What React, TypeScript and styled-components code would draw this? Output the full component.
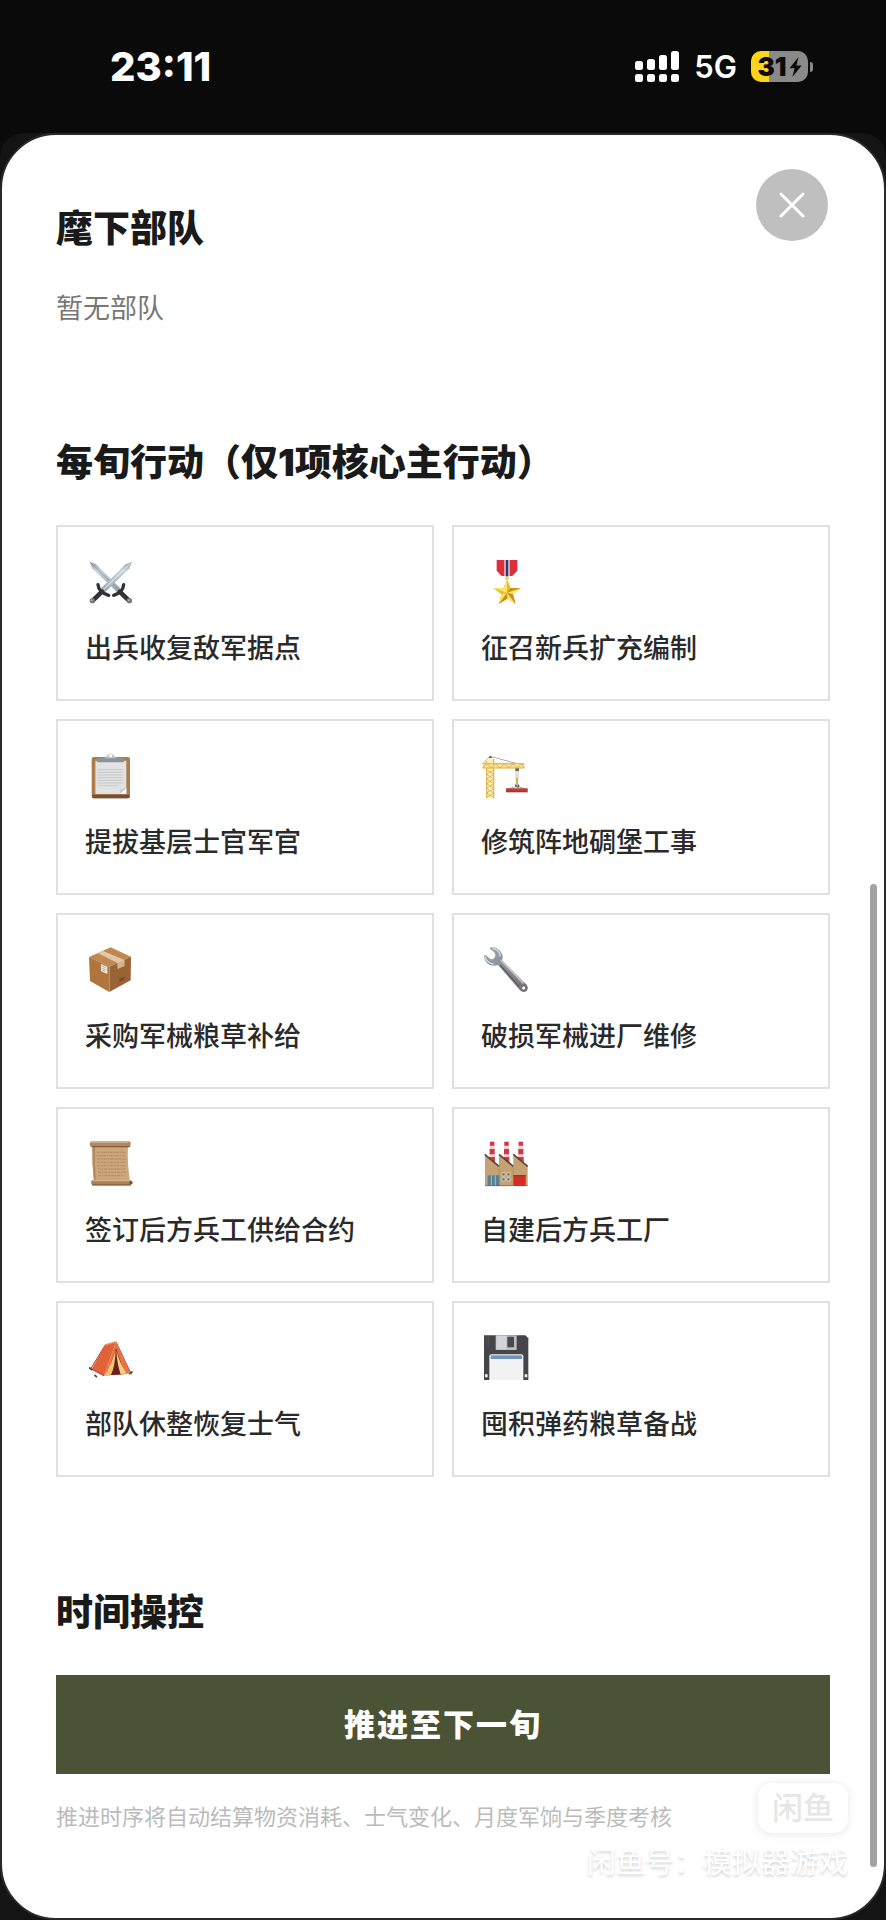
import type { ReactNode } from "react";
import styled, { createGlobalStyle } from "styled-components";

const GlobalStyle = createGlobalStyle`
  * {
    box-sizing: border-box;
  }

  body {
    margin: 0;
    background: #0a0a0a;
    font-family: Inter, "Noto Sans CJK SC", sans-serif;
  }

  h2,
  p {
    margin: 0;
  }
`;

const Screen = styled.div`
  display: flex;
  flex-direction: column;
  min-height: 100vh;
`;

const StatusBar = styled.header`
  display: flex;
  justify-content: space-between;
  align-items: center;
  height: 133px;
  padding: 0 73px 0 110px;
  color: #fff;
`;

const Clock = styled.time`
  font-size: 40px;
  font-weight: 800;
`;

const StatusIcons = styled.div`
  display: flex;
  align-items: center;
  gap: 14px;
`;

const Network = styled.span`
  font-size: 31px;
  font-weight: 600;
`;

const Battery = styled.div`
  display: flex;
  align-items: center;
  gap: 2px;

  &::after {
    content: "";
    width: 3px;
    height: 10px;
    border-radius: 0 5px 5px 0;
    background: #8a8a8a;
  }
`;

const BatteryBody = styled.div`
  display: flex;
  justify-content: center;
  align-items: center;
  gap: 2px;
  width: 57px;
  height: 31px;
  border-radius: 10px;
  background: linear-gradient(to right, #fcd41c 32%, #8a8a8a 32%);
  color: #0a0a0a;
  font-size: 26px;
  font-weight: 900;
`;

const Backdrop = styled.div`
  display: flex;
  flex: 1;
  border-radius: 24px 24px 0 0;
  background: #141414;
`;

const Sheet = styled.main`
  position: relative;
  flex: 1;
  padding: 68px 54px 80px;
  border: 2px solid #2a2a2a;
  border-radius: 56px;
  background: #fff;
`;

const Section = styled.section`
  & + & {
    margin-top: 110px;
  }
`;

const Heading = styled.h2`
  margin-bottom: 36px;
  color: #1a1a1a;
  font-size: 37px;
  font-weight: 900;
  line-height: 52px;
`;

const Empty = styled.p`
  color: #777;
  font-size: 27px;
  line-height: 36px;
`;

const Grid = styled.div`
  display: grid;
  grid-template-columns: 1fr 1fr;
  gap: 18px;
`;

const Card = styled.button`
  display: flex;
  flex-direction: column;
  align-items: flex-start;
  gap: 24px;
  padding: 31px 27px;
  border: 2px solid #e0e0e0;
  background: #fff;
  color: #2a2a2a;
  font-family: inherit;
  font-size: 27px;
  font-weight: 500;
  line-height: 38px;
  text-align: left;

  svg {
    display: block;
    width: 48px;
    height: 48px;
  }
`;

const Advance = styled.button`
  display: block;
  width: 100%;
  padding: 27px;
  border: none;
  background: #4a5335;
  color: #fff;
  font-family: inherit;
  font-size: 31px;
  font-weight: 900;
  letter-spacing: 2px;
  line-height: 45px;
`;

const Hint = styled.p`
  margin-top: 27px;
  color: #bbb;
  font-size: 22px;
  line-height: 32px;
`;

const Close = styled.button`
  position: absolute;
  top: 34px;
  right: 56px;
  display: flex;
  justify-content: center;
  align-items: center;
  width: 72px;
  height: 72px;
  padding: 0;
  border: none;
  border-radius: 50%;
  background: #bfbfbf;
`;

const ScrollThumb = styled.div`
  position: absolute;
  top: 42%;
  right: 7px;
  bottom: 51px;
  width: 7px;
  border-radius: 4px;
  background: #a3a3a3;
`;

const Watermark = styled.div`
  position: absolute;
  right: 36px;
  bottom: 34px;
  display: flex;
  flex-direction: column;
  align-items: flex-end;
  gap: 9px;
`;

const Badge = styled.span`
  padding: 0 14px;
  border-radius: 14px;
  background: #fff;
  box-shadow: 0 1px 10px rgba(0, 0, 0, 0.1);
  color: #e6e6e6;
  font-size: 31px;
  font-weight: 500;
  line-height: 50px;
`;

const Account = styled.span`
  color: #fff;
  font-size: 29px;
  line-height: 42px;
  text-shadow: 0 2px 3px rgba(0, 0, 0, 0.18);
`;

function Signal() {
  return (
    <svg width="45" height="32" viewBox="0 0 45 32" fill="#fff" aria-hidden="true">
      <rect x="0" y="10" width="8" height="9" rx="2.5" />
      <rect x="12" y="8" width="8" height="11" rx="2.5" />
      <rect x="24" y="4" width="8" height="15" rx="2.5" />
      <rect x="36" y="0" width="8" height="19" rx="2.5" />
      <rect x="0" y="23" width="8" height="8" rx="2.5" />
      <rect x="12" y="23" width="8" height="8" rx="2.5" />
      <rect x="24" y="23" width="8" height="8" rx="2.5" />
      <rect x="36" y="23" width="8" height="8" rx="2.5" />
    </svg>
  );
}

function Bolt() {
  return (
    <svg width="13" height="20" viewBox="0 0 13 20" fill="#0a0a0a" aria-hidden="true">
      <path d="M9.5 0 0.5 11.2H5.6L3.4 20 12.6 8.4H7.4Z" />
    </svg>
  );
}

function Icon({ children }: { children: ReactNode }) {
  return (
    <svg viewBox="0 0 144 144" aria-hidden="true">
      {children}
    </svg>
  );
}

function Swords() {
  return (
    <Icon>
      <defs>
        <linearGradient id="blade" x1="0" y1="0" x2="0" y2="1">
          <stop offset="0" stopColor="#8f9ba5" />
          <stop offset="0.3" stopColor="#c8d5de" />
          <stop offset="1" stopColor="#98a3ac" />
        </linearGradient>
      </defs>
      <path d="M15 12 33 19 106 90 95 101 21 31Z" fill="url(#blade)" />
      <path d="M15 12 100 94" stroke="#7b858e" strokeWidth="2" />
      <path d="M140 12 122 19 48 91 60 103 134 31Z" fill="url(#blade)" />
      <path d="M136 16 56 95" stroke="#edf4f8" strokeWidth="3" />
      <g fill="none" stroke="#303236" strokeLinecap="round">
        <path d="M39 80Q41 103 71 112" strokeWidth="10" />
        <path d="M51 101 27 124" strokeWidth="14" />
        <path d="M116 80Q114 103 86 112" strokeWidth="10" />
        <path d="M104 101 128 124" strokeWidth="14" />
      </g>
      <circle cx="22" cy="128" r="8" fill="#777377" />
      <circle cx="133" cy="128" r="8" fill="#777377" />
      <circle cx="20" cy="127" r="3" fill="#b9b5b8" />
      <circle cx="131" cy="127" r="3" fill="#b9b5b8" />
    </Icon>
  );
}

function Medal() {
  return (
    <Icon>
      <path d="M47 6H109V38L94 54H62L47 38Z" fill="#dc2f3b" />
      <path d="M70 6H86V54H70Z" fill="#f0dfe6" />
      <path d="M74 6H82V54H74Z" fill="#343767" />
      <circle cx="78" cy="59" r="4" fill="none" stroke="#d5a431" strokeWidth="3" />
      <path d="M78 63 89 90 119 91 96 109 104 138 79 122 53 138 61 109 38 91 68 90Z" fill="#e8bd27" />
      <path d="M78 63V104L68 90ZM119 91 78 104 96 109ZM104 138 78 104 79 122ZM53 138 78 104 61 109ZM38 91 78 104 68 90Z" fill="#fae36a" />
      <path d="M119 91 78 104 89 90ZM53 138 78 104 79 122ZM96 109 78 104 104 138Z" fill="#b97d16" opacity="0.7" />
    </Icon>
  );
}

function Clipboard() {
  return (
    <Icon>
      <rect x="20" y="15" width="115" height="124" rx="6" fill="#ad7c4b" />
      <path d="M22 128H133V134Q133 139 128 139H27Q22 139 22 134Z" fill="#76503a" />
      <path d="M31 26H124V126H31Z" fill="#e2e2e2" />
      <path d="M31 126H104L124 108V126Z" fill="#fafafa" />
      <path d="M104 126 107 111 124 108Z" fill="#c9c9c9" />
      <path d="M37 53H114M37 61H114M37 69H114M37 77H114M37 85H114M37 93H114M37 101H100" stroke="#c7c9cb" strokeWidth="3" />
      <rect x="35" y="17" width="83" height="14" rx="5" fill="#8d9198" />
      <path d="M55 19Q64 17 66 11Q77-2 88 11Q90 17 100 19Z" fill="#c0c3c8" />
      <circle cx="77" cy="11" r="5" fill="#fff" />
    </Icon>
  );
}

function Crane() {
  return (
    <Icon>
      <path d="M28 13 6 34M28 13 108 35" fill="none" stroke="#8b8069" strokeWidth="2" />
      <path d="M20 19H36V139H18Z" fill="#fbf0c2" />
      <path d="M17 28V139M38 20V139" stroke="#e3bd50" strokeWidth="4" />
      <path d="M17 53 38 67 17 81 38 95 17 109 38 123 17 137M38 53 17 67 38 81 17 95 38 109 17 123 38 137" fill="none" stroke="#dfb84d" strokeWidth="3" />
      <path d="M5 34H130V49H5Z" fill="#fae29a" />
      <path d="M5 35H130M5 48H130M5 48 18 35 31 48 44 35 57 48 70 35 83 48 96 35 109 48 122 35 130 48" fill="none" stroke="#dfb13e" strokeWidth="3" />
      <path d="M22 18 28 11 34 18Z" fill="#69563b" />
      <path d="M103 49H114V57H103Z" fill="#66615a" />
      <path d="M105 56V80M111 56V80" stroke="#a8a69f" strokeWidth="2" />
      <path d="M108 77V101" stroke="#d8ae43" strokeWidth="6" />
      <path d="M104 98Q103 105 110 105Q115 105 112 98" fill="none" stroke="#45484c" strokeWidth="4" />
      <path d="M108 103 84 110M108 103 132 110" stroke="#777" strokeWidth="2" />
      <rect x="75" y="109" width="65" height="12" fill="#a73530" />
      <path d="M75 114H140" stroke="#c95a4d" strokeWidth="2" />
    </Icon>
  );
}

function Parcel() {
  return (
    <Icon>
      <path d="M12 33 77 4 138 32 73 62Z" fill="#bf8853" />
      <path d="M12 33 73 62V138L15 105Z" fill="#b0753f" />
      <path d="M73 62 138 32 137 103 73 138Z" fill="#9a6333" />
      <path d="M37 21 53 14 118 42V60L98 68V51Z" fill="#e3c6a5" />
      <path d="M98 51 118 42V60L98 68Z" fill="#d3b28e" />
      <path d="M48 54 67 62V84L48 76Z" fill="#eee8dc" />
      <path d="M51 60 62 65M51 66 64 72M51 72 60 76" stroke="#a3a098" strokeWidth="2" />
      <path d="M103 98 119 91V101L103 109Z" fill="#7c4c26" />
      <path d="M73 62V138" stroke="#d09a65" strokeWidth="2" />
    </Icon>
  );
}

function Wrench() {
  return (
    <Icon>
      <defs>
        <linearGradient id="steel" x1="0" y1="0" x2="1" y2="1">
          <stop offset="0" stopColor="#9ba9b2" />
          <stop offset="0.45" stopColor="#8b8e94" />
          <stop offset="1" stopColor="#746e73" />
        </linearGradient>
      </defs>
      <path d="M28 4Q50 2 61 20Q68 30 63 43L137 116Q144 126 137 134Q128 142 117 133L51 57Q39 62 25 56Q10 49 9 29L14 27 28 39Q37 42 42 32Q45 25 39 18L27 9Z" fill="url(#steel)" />
      <path d="M61 44 126 111" stroke="#c4c4c9" strokeWidth="5" strokeLinecap="round" />
      <path d="M58 58 114 121" stroke="#5e5b61" strokeWidth="4" strokeLinecap="round" />
      <path d="M34 8Q54 8 58 31M12 32Q17 52 38 54" fill="none" stroke="#d5e1e6" strokeWidth="4" />
      <circle cx="128" cy="126" r="6" fill="#fff" stroke="#56575c" strokeWidth="2" />
    </Icon>
  );
}

function Scroll() {
  return (
    <Icon>
      <path d="M22 16H129Q126 65 135 126H27Q21 71 22 16Z" fill="#cda57b" />
      <path d="M31 16Q28 76 34 126H27Q21 71 22 16Z" fill="#b38a62" />
      <path d="M21 4H130Q139 5 137 13L135 22H20Q14 20 14 12Q14 5 21 4Z" fill="#b18a62" />
      <path d="M18 6H130" stroke="#dab68d" strokeWidth="4" />
      <path d="M20 20H134" stroke="#765537" strokeWidth="3" />
      <path d="M21 120H137Q143 127 138 136H22Q15 128 21 120Z" fill="#a98159" />
      <path d="M23 122H136" stroke="#d8b48c" strokeWidth="4" />
      <path d="M22 135H138" stroke="#765537" strokeWidth="3" />
      <circle cx="138" cy="128" r="5" fill="#755233" />
      <path d="M36 37H120M35 47H119M37 57H121M36 67H120M37 77H121M38 87H120M39 97H123M39 107H116" stroke="#a77c50" strokeWidth="2" strokeDasharray="9 3 5 2" />
    </Icon>
  );
}

function Factory() {
  return (
    <Icon>
      {[25, 68, 111].map((x) => (
        <g key={x}>
          <path d={`M${x + 2} 5H${x + 15}L${x + 18} 72H${x - 1}Z`} fill="#f3cdd1" />
          <path d={`M${x + 2} 5H${x + 15}V17H${x + 2}ZM${x + 1} 27H${x + 16}V43H${x + 1}ZM${x} 51H${x + 17}V66H${x}Z`} fill="#cf3945" />
        </g>
      ))}
      <path d="M12 43 54 78V43L97 78V43L140 78V138H12Z" fill="#c4a273" />
      <path d="M11 43 54 79M54 43 97 79M97 43 140 79" stroke="#574536" strokeWidth="5" />
      <path d="M54 78V138M97 78V138" stroke="#aa885f" strokeWidth="2" />
      <rect x="20" y="106" width="35" height="32" fill="#558096" />
      <path d="M31 106V138M43 106V138" stroke="#a3bfc9" strokeWidth="3" />
      <path d="M63 98H72V108H63ZM78 98H87V108H78ZM63 113H72V123H63ZM78 113H87V123H78Z" fill="#607d86" stroke="#eee0be" strokeWidth="2" />
      <rect x="97" y="106" width="37" height="32" fill="#d52c28" />
      <path d="M97 107H134" stroke="#76483a" strokeWidth="4" />
      <path d="M12 137H140" stroke="#765b42" strokeWidth="2" />
    </Icon>
  );
}

function Tent() {
  return (
    <Icon>
      <path d="M60 34 17 105M93 24 139 121" stroke="#92402d" strokeWidth="3" />
      <path d="M60 33 93 24 57 125 20 106Z" fill="#e16138" />
      <path d="M93 24 137 118 98 122 57 125Z" fill="#ed7141" />
      <path d="M93 43 119 120 98 122 66 123Z" fill="#6a211c" />
      <path d="M92 47Q91 95 78 122L59 124Q79 91 92 47Z" fill="#f2c477" />
      <path d="M94 49Q105 91 124 118L107 121Q96 90 94 49Z" fill="#f5cf88" />
      <path d="M60 33 93 24" stroke="#f18b61" strokeWidth="4" />
      <path d="M20 106 57 125" stroke="#a03d2a" strokeWidth="3" />
      <path d="M14 102 20 107M30 124 34 128M135 119 141 114" stroke="#5b4039" strokeWidth="5" strokeLinecap="round" />
    </Icon>
  );
}

function Floppy() {
  return (
    <Icon>
      <path d="M9 4H133L142 13V138H9Z" fill="#454549" />
      <path d="M17 5V42M23 5V42" stroke="#58585d" strokeWidth="2" />
      <path d="M44 4H107V48H44Z" fill="#bcbec0" />
      <path d="M46 5H76V46H46Z" fill="#d3d4d5" />
      <rect x="79" y="8" width="20" height="32" rx="2" fill="#49484c" />
      <path d="M25 138V67Q25 61 31 61H121Q127 61 127 67V138Z" fill="#f2f2f2" />
      <path d="M29 64H123V75H29Z" fill="#6f94bd" />
      <path d="M12 121H20V130H12ZM131 121H139V130H131Z" fill="#eee" />
    </Icon>
  );
}

const actions = [
  { label: "出兵收复敌军据点", icon: <Swords /> },
  { label: "征召新兵扩充编制", icon: <Medal /> },
  { label: "提拔基层士官军官", icon: <Clipboard /> },
  { label: "修筑阵地碉堡工事", icon: <Crane /> },
  { label: "采购军械粮草补给", icon: <Parcel /> },
  { label: "破损军械进厂维修", icon: <Wrench /> },
  { label: "签订后方兵工供给合约", icon: <Scroll /> },
  { label: "自建后方兵工厂", icon: <Factory /> },
  { label: "部队休整恢复士气", icon: <Tent /> },
  { label: "囤积弹药粮草备战", icon: <Floppy /> },
];

export default function App() {
  return (
    <Screen lang="zh-CN">
      <GlobalStyle />
      <StatusBar>
        <Clock>23:11</Clock>
        <StatusIcons>
          <Signal />
          <Network>5G</Network>
          <Battery>
            <BatteryBody>
              31
              <Bolt />
            </BatteryBody>
          </Battery>
        </StatusIcons>
      </StatusBar>
      <Backdrop>
        <Sheet>
          <Section>
            <Heading>麾下部队</Heading>
            <Empty>暂无部队</Empty>
          </Section>
          <Section>
            <Heading>每旬行动（仅1项核心主行动）</Heading>
            <Grid>
              {actions.map(({ label, icon }) => (
                <Card key={label} type="button">
                  {icon}
                  <span>{label}</span>
                </Card>
              ))}
            </Grid>
          </Section>
          <Section>
            <Heading>时间操控</Heading>
            <Advance type="button">推进至下一旬</Advance>
            <Hint>推进时序将自动结算物资消耗、士气变化、月度军饷与季度考核</Hint>
          </Section>
          <Close type="button" aria-label="关闭">
            <svg width="30" height="30" viewBox="0 0 30 30" aria-hidden="true">
              <path d="M4 4 26 26M26 4 4 26" stroke="#fff" strokeWidth="3" strokeLinecap="round" />
            </svg>
          </Close>
          <Watermark>
            <Badge>闲鱼</Badge>
            <Account>闲鱼号：模拟器游戏</Account>
          </Watermark>
          <ScrollThumb />
        </Sheet>
      </Backdrop>
    </Screen>
  );
}
